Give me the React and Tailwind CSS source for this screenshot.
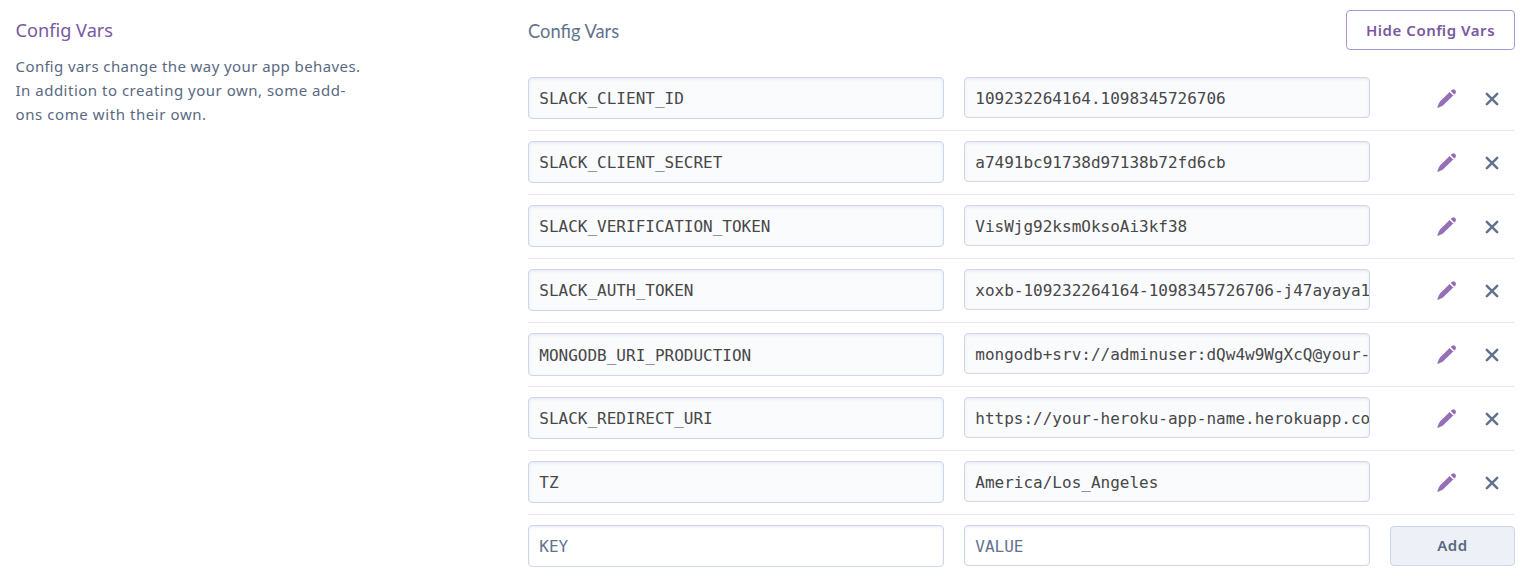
const vars = [
  { key: 'SLACK_CLIENT_ID', value: '109232264164.1098345726706' },
  { key: 'SLACK_CLIENT_SECRET', value: 'a7491bc91738d97138b72fd6cb' },
  { key: 'SLACK_VERIFICATION_TOKEN', value: 'VisWjg92ksmOksoAi3kf38' },
  { key: 'SLACK_AUTH_TOKEN', value: 'xoxb-109232264164-1098345726706-j47ayaya1' },
  { key: 'MONGODB_URI_PRODUCTION', value: 'mongodb+srv://adminuser:dQw4w9WgXcQ@your-', tall: true },
  { key: 'SLACK_REDIRECT_URI', value: 'https://your-heroku-app-name.herokuapp.co' },
  { key: 'TZ', value: 'America/Los_Angeles' },
];

const field =
  "block rounded-[4px] border border-[#cfd7e6] pl-[10.3px] font-['DejaVu_Sans_Mono','Liberation_Mono',monospace] text-[16px] leading-[24px] overflow-hidden whitespace-nowrap shadow-[inset_0_1px_3px_rgba(207,215,230,0.5)] outline-none";

function PencilIcon() {
  return (
    <svg width="21" height="21" viewBox="-0.6 -0.6 21 21" className="block">
      <path
        d="M13 3.3 L16.7 7 L7.4 15.9 Q6 17.2 4.4 18 L1.6 19.2 Q0.5 19.5 0.8 18.4 L2 15.4 Q2.6 13.7 3.8 12.4 Z"
        fill="#9370b8"
      />
      <path
        d="M14.1 2.4 L15.5 1.1 Q17 -0.1 18.6 1.5 Q20.1 3.1 18.9 4.6 L17.6 5.9 Z"
        fill="#9370b8"
      />
    </svg>
  );
}

function CloseIcon() {
  return (
    <svg width="14" height="14" viewBox="0 0 14 14" className="block">
      <path d="M1.8 1.8 L12.2 12.2 M12.2 1.8 L1.8 12.2" stroke="#62738d" strokeWidth="2.5" strokeLinecap="round" />
    </svg>
  );
}

function VarRow({ item }) {
  return (
    <div className="flex h-[64px] items-start border-b border-[#e3e8f2] pt-[10px]">
      <input
        readOnly
        value={item.key}
        className={`${field} w-[416px] bg-[#fafbfd] text-[#474747] ${item.tall ? 'h-[43px] pt-[1px]' : 'h-[42px]'}`}
      />
      <div className={`${field} ml-5 h-[41px] w-[406px] bg-[#fafbfd] pt-[9px] text-[#474747]`}>{item.value}</div>
      <button className="ml-[66px] mt-[11px]" aria-label="Edit">
        <PencilIcon />
      </button>
      <button className="ml-[28px] mt-[15px]" aria-label="Remove">
        <CloseIcon />
      </button>
    </div>
  );
}

export default function App() {
  return (
    <main className="flex h-[581px] w-[1525px] overflow-hidden bg-white font-['Lato',sans-serif]">
      <aside className="w-[528px] shrink-0 pl-[15.5px] pt-[18px]">
        <h2 className="font-['Noto_Sans',sans-serif] text-[18.2px] leading-[24px] text-[#79589f]">
          <span>Config Vars</span>
        </h2>
        <p className="mt-[12px] whitespace-nowrap font-['Noto_Sans',sans-serif] text-[15px] leading-[24px] text-[#596981] [font-feature-settings:'liga']">
          <span className="tracking-[0.41px]">Config vars change the way your app behaves.</span>
          <br />
          <span className="tracking-[0.5px]">In addition to creating your own, some add-</span>
          <br />
          <span className="tracking-[0.58px]">ons come with their own.</span>
        </p>
      </aside>
      <section className="w-[987px] shrink-0">
        <header className="flex h-[67px] items-start justify-between">
          <h3 className="pt-[19px] text-[18.3px] leading-[24px] text-[#62738d]">
            <span>Config Vars</span>
          </h3>
          <button className="mt-[10px] h-[40px] w-[169px] rounded-[4px] border border-[#ae94cc] font-['Noto_Sans',sans-serif] text-[15px] font-semibold leading-[24px] tracking-[0.55px] text-[#79589f] [font-feature-settings:'liga']">
            <span>Hide Config Vars</span>
          </button>
        </header>
        {vars.map((item) => (
          <VarRow key={item.key} item={item} />
        ))}
        <div className="flex items-start pt-[10px]">
          <input placeholder="KEY" className={`${field} h-[42px] w-[416px] placeholder:text-[#62738d]`} />
          <input placeholder="VALUE" className={`${field} ml-5 h-[41px] w-[406px] pt-[1px] placeholder:text-[#62738d]`} />
          <button className="ml-5 mt-px h-[40px] w-[125px] rounded-[4px] border border-[#cfd7e6] bg-[#edf0f6] pb-[2px] font-['Noto_Sans',sans-serif] text-[15px] font-semibold leading-[24px] tracking-[0.6px] text-[#596981]">
            <span>Add</span>
          </button>
        </div>
      </section>
    </main>
  );
}
